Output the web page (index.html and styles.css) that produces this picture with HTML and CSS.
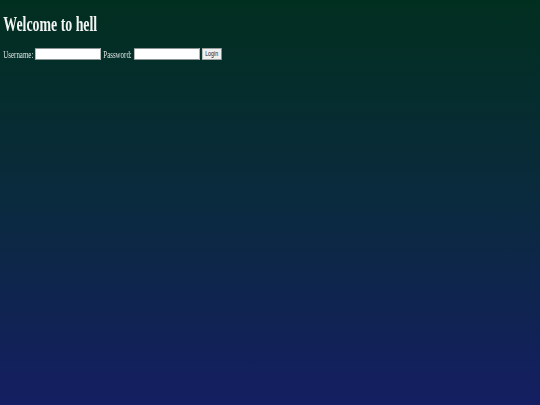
FILE: index.html
```html
<!DOCTYPE html>
<html>
<head>
<meta charset="utf-8">
<link rel="stylesheet" href="styles.css">
</head>
<body>
<div class="page">
  <h1 class="title">Welcome to hell</h1>
  <form class="login">
    <label class="lbl">Username:</label>
    <input class="field" type="text">
    <label class="lbl">Password:</label>
    <input class="field" type="password">
    <button class="btn" type="button">Login</button>
  </form>
</div>
</body>
</html>
```

FILE: styles.css
```css
html, body {
  margin: 0;
  height: 100%;
}
body {
  background: linear-gradient(to bottom, #012f1f 0%, #0a2a3e 50%, #141e62 100%);
  font-family: "Liberation Serif", "Times New Roman", serif;
  color: #e8ecec;
}
.page {
  transform: scaleX(0.66);
  transform-origin: 0 0;
  padding: 14px 5px 0 5px;
}
.title {
  margin: 0;
  font-size: 21px;
  line-height: 20px;
  font-weight: bold;
  color: #f2f4f2;
}
.login {
  margin-top: 14px;
  display: flex;
  align-items: center;
  gap: 3px;
  font-size: 10.5px;
}
.lbl {
  color: #dfe6e4;
}
.field {
  width: 100px;
  height: 12px;
  box-sizing: border-box;
  border: 1px solid #8a9494;
  background: #fff;
  padding: 0;
  margin: 0;
}
.btn {
  width: 30px;
  height: 12px;
  box-sizing: border-box;
  padding: 0;
  margin: 0;
  border: 1px solid #9aa0a0;
  background: #efefef;
  color: #222;
  font-family: "Liberation Sans", Arial, sans-serif;
  font-size: 8px;
  line-height: 10px;
}
```
